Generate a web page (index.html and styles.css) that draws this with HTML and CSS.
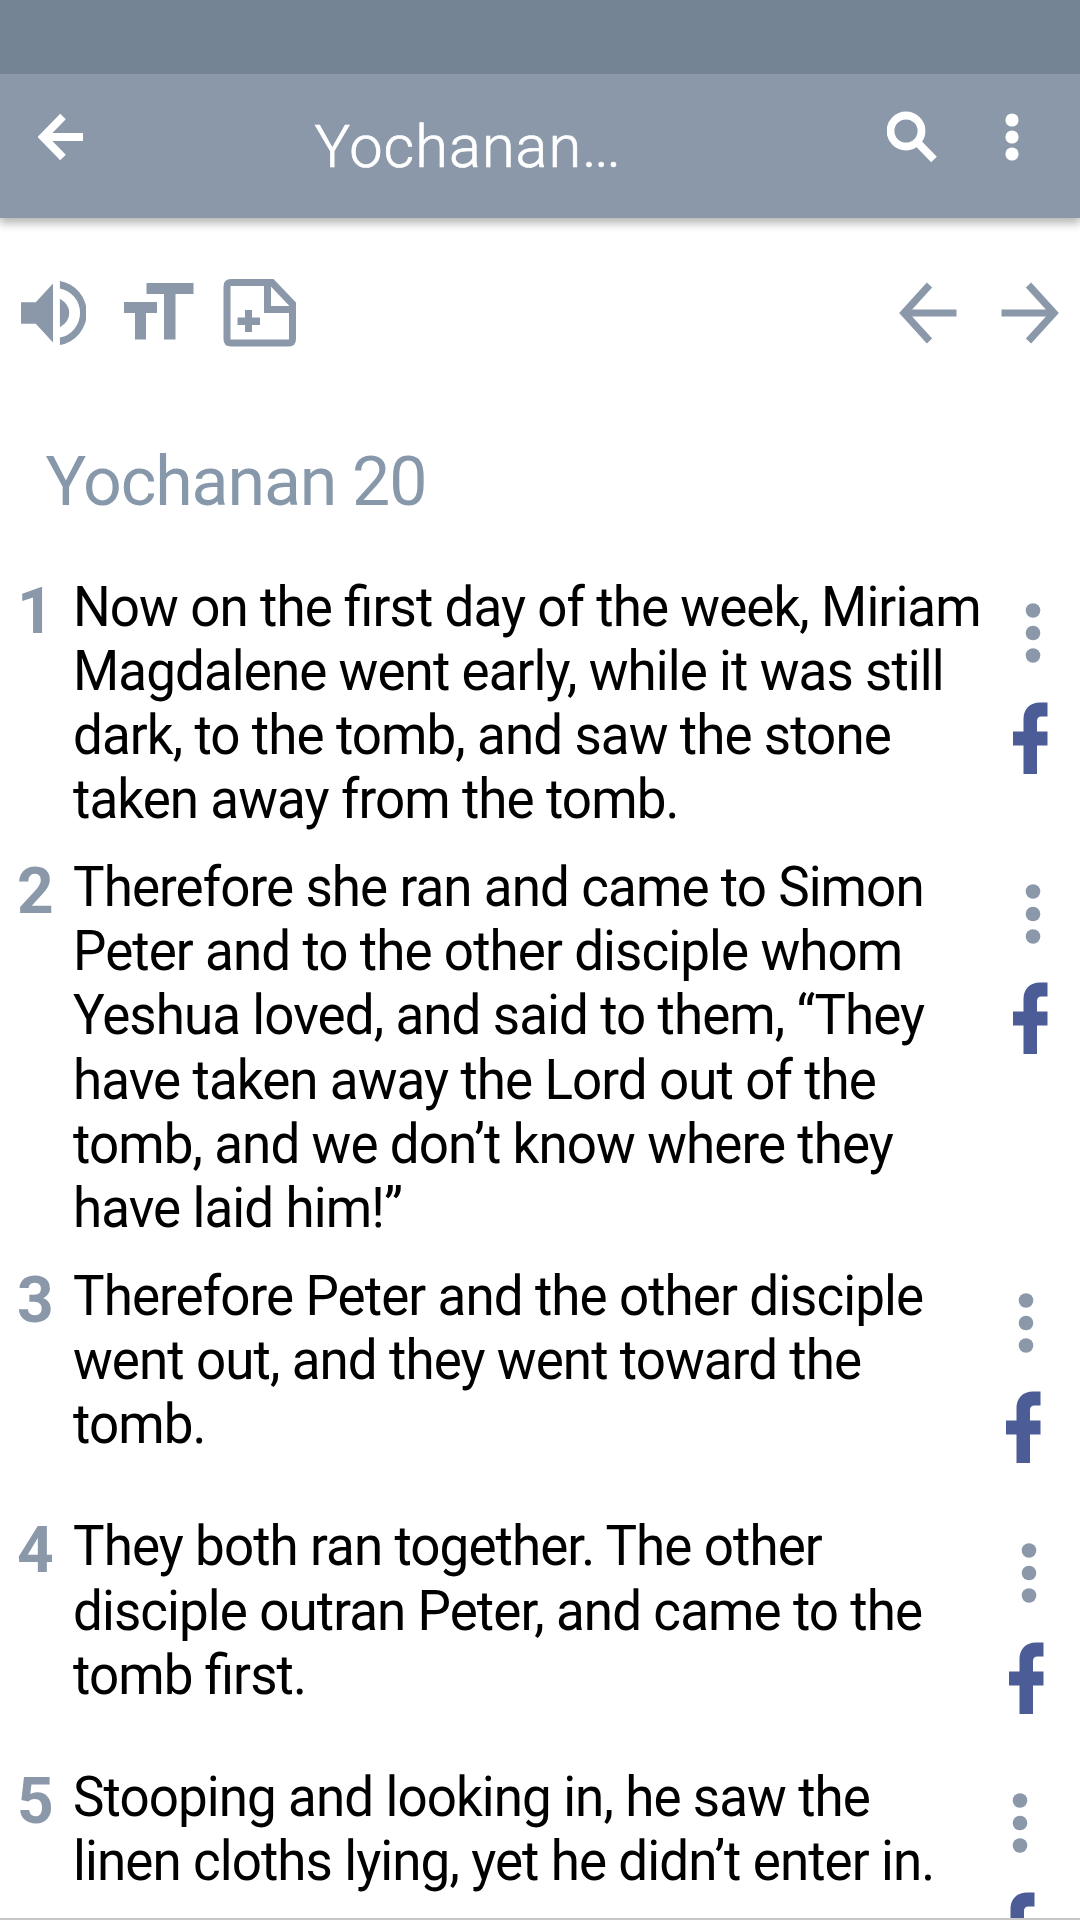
FILE: index.html
```html
<!DOCTYPE html>
<html lang="en">
<head>
<meta charset="utf-8">
<title>Yochanan 20</title>
<link rel="stylesheet" href="styles.css">
</head>
<body>
<svg class="defs" width="0" height="0" aria-hidden="true">
  <symbol id="dots" viewBox="0 0 16 60"><circle cx="8" cy="7.5" r="7.3"/><circle cx="8" cy="30" r="7.3"/><circle cx="8" cy="52.5" r="7.3"/></symbol>
  <symbol id="facebook" viewBox="0 0 35 72"><path d="M34.5 0.5H27C17 0.5 10.5 7 10.5 17V29.5H0V43.5H10.5V72H24V43.5H34.5V29.5H24V19Q24 14.5 28.5 14.5H34.5Z"/></symbol>
</svg>
<div class="screen">
  <div class="status-bar"></div>
  <header class="app-bar">
    <svg class="back" width="46" height="48" viewBox="0 0 46 48"><path d="M25 3.5L5 24L25 44.5M5 24H45"/></svg>
    <h1 class="title">Yochanan<span class="ellipsis">...</span></h1>
    <svg class="search" width="50" height="52" viewBox="0 0 50 52"><circle cx="19" cy="20" r="15.5"/><path d="M30 31L47 48.5"/></svg>
    <svg class="more" width="14" height="48" viewBox="0 0 14 48"><circle cx="7" cy="7" r="6.6"/><circle cx="7" cy="24" r="6.6"/><circle cx="7" cy="41" r="6.6"/></svg>
  </header>
  <nav class="tools">
    <svg class="speaker" width="66" height="70" viewBox="0 0 66 70"><path d="M0 24H15L32.5 5V65L15 46H0ZM39.500 20.500Q49 26 49 35T39.500 49.500ZM39.500 2.500A33 33 0 0 1 39.500 67.500V60A25.500 25.500 0 0 0 39.500 10Z"/></svg>
    <svg class="text-size" width="70" height="70" viewBox="0 0 70 70"><path d="M22.500 5H69.500V16H51.500V61.500H40V16H22.500ZM0 24H33V35H22V61.500H11V35H0Z"/></svg>
    <svg class="note" width="74" height="70" viewBox="0 0 74 70"><path class="outline" d="M8 4.500H49L69.500 26V61Q69.500 65 65.500 65H8Q4 65 4 61V8.500Q4 4.500 8 4.500ZM44.500 4.500V31.500H69"/><path d="M22 32H29V39.500H37V47H29V54H22V47H14.500V39.500H22Z"/></svg>
    <svg class="prev" width="58" height="62" viewBox="0 0 58 62"><path d="M30.500 3L5 31L30.500 59M5 31H57.500"/></svg>
    <svg class="next" width="58" height="62" viewBox="0 0 58 62"><path d="M27.500 3L53 31L27.500 59M53 31H0.500"/></svg>
  </nav>
  <main>
    <h2 class="chapter">Yochanan 20</h2>
    <article class="verse">
      <b class="number">1</b>
      <p class="text"><span>Now on the first day of the week, Miriam</span><span>Magdalene went early, while it was still</span><span>dark, to the tomb, and saw the stone</span><span>taken away from the tomb.</span></p>
      <div class="actions"><svg class="dots"><use href="#dots"/></svg><svg class="facebook"><use href="#facebook"/></svg></div>
    </article>
    <article class="verse">
      <b class="number">2</b>
      <p class="text"><span>Therefore she ran and came to Simon</span><span>Peter and to the other disciple whom</span><span>Yeshua loved, and said to them, “They</span><span>have taken away the Lord out of the</span><span>tomb, and we don’t know where they</span><span>have laid him!”</span></p>
      <div class="actions"><svg class="dots"><use href="#dots"/></svg><svg class="facebook"><use href="#facebook"/></svg></div>
    </article>
    <article class="verse verse-3">
      <b class="number">3</b>
      <p class="text"><span>Therefore Peter and the other disciple</span><span>went out, and they went toward the</span><span>tomb.</span></p>
      <div class="actions"><svg class="dots"><use href="#dots"/></svg><svg class="facebook"><use href="#facebook"/></svg></div>
    </article>
    <article class="verse verse-4">
      <b class="number">4</b>
      <p class="text"><span>They both ran together. The other</span><span>disciple outran Peter, and came to the</span><span>tomb first.</span></p>
      <div class="actions"><svg class="dots"><use href="#dots"/></svg><svg class="facebook"><use href="#facebook"/></svg></div>
    </article>
    <article class="verse verse-5">
      <b class="number">5</b>
      <p class="text"><span>Stooping and looking in, he saw the</span><span>linen cloths lying, yet he didn’t enter in.</span></p>
      <div class="actions"><svg class="dots"><use href="#dots"/></svg><svg class="facebook"><use href="#facebook"/></svg></div>
    </article>
  </main>
  <footer class="edge"></footer>
</div>
</body>
</html>
```
FILE: styles.css
```css
* { box-sizing: border-box; }
body { margin: 0; font-family: Roboto, sans-serif; background: #fff; }
h1, h2, p { margin: 0; }
svg { display: block; flex: none; }
.defs { position: absolute; }

.screen { width: 1080px; height: 1920px; display: flex; flex-direction: column; overflow: hidden; }
.status-bar { height: 74px; flex: none; background: #748494; }

.app-bar {
  height: 144px; flex: none; display: flex; align-items: flex-start;
  padding: 38.500px 61px 0 38px; background: #8b98aa; color: #fff;
  box-shadow: 0 4px 9px 1px rgba(0, 0, 0, .3);
  clip-path: inset(0 0 -20px 0);
}
.app-bar svg { fill: #fff; }
.back, .search { stroke: #fff; stroke-width: 7.8; }
.app-bar .back, .app-bar .search { fill: none; }
.title {
  flex: 1; padding-left: 230.500px; margin-top: .5px; font-size: 59.5px; font-weight: 300;
  line-height: 69px; letter-spacing: 1px; white-space: nowrap; -webkit-text-stroke: .7px #fff;
}
.ellipsis { letter-spacing: -2px; }
.search { margin: -2px 68px 0 0; }

.tools { height: 216px; flex: none; display: flex; align-items: flex-start; padding: 59.500px 21px 0; fill: #8b98aa; }
.speaker { width: 65px; }
.text-size { margin-left: 37.500px; }
.note { margin-left: 29px; }
.note .outline { fill: none; stroke: #8b98aa; stroke-width: 7; }
.prev, .next { fill: none; stroke: #8b98aa; stroke-width: 7.2; margin-top: 4px; }
.prev { margin-left: auto; }
.next { margin-left: 44px; }

main { height: 1484px; flex: none; overflow: hidden; }
.chapter {
  height: 140.500px; padding: 8px 0 0 45.500px; font-size: 68px; line-height: 80px;
  font-weight: 400; letter-spacing: -1.1px; color: #8798ab;
}

.verse { display: grid; grid-template-columns: 55px 940px 76px; min-height: 250.300px; padding-left: 18px; padding-bottom: 24px; }
.number { font-size: 64px; line-height: 73px; font-weight: 700; color: #8b98aa; margin-left: -1px; }
.text {
  font-size: 56px; line-height: 64.150px; color: #000; white-space: nowrap;
  letter-spacing: -.96px; font-feature-settings: "liga" 1;
  transform: scaleX(.945); transform-origin: 0 0;
}
.text span { display: block; }
.actions { display: flex; flex-direction: column; height: 226px; padding-top: 28.800px; }
.dots { width: 16px; height: 60px; margin-left: 12px; fill: #8b98aa; }
.facebook { width: 35px; height: 72px; margin-top: 38.500px; fill: #4b5c96; }
.verse-3 .actions { margin-left: -7px; }
.verse-4 .actions { margin-left: -4px; }
.verse-5 .actions { margin-left: -13px; }

.edge { height: 2px; flex: none; background: #c8c8c8; }
```
